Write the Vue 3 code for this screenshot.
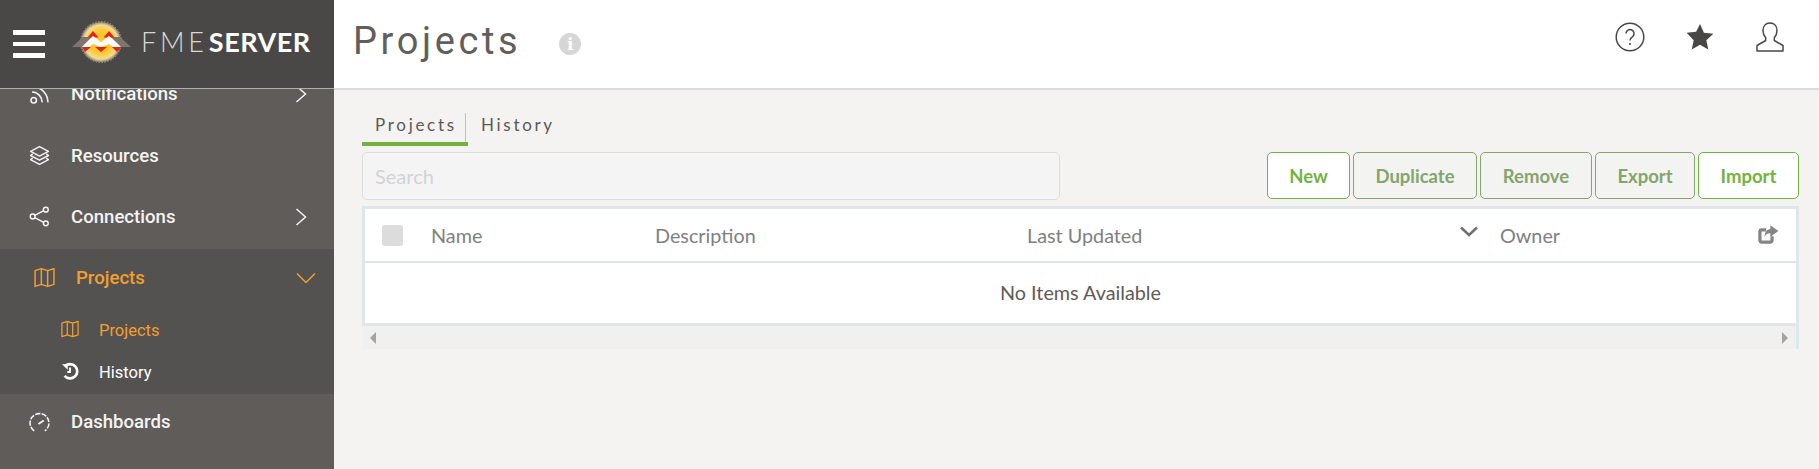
<script setup>
const buttons = [
  { label: 'New', on: true, width: 83 },
  { label: 'Duplicate', on: false, width: 124 },
  { label: 'Remove', on: false, width: 112 },
  { label: 'Export', on: false, width: 100 },
  { label: 'Import', on: true, width: 101 },
]
</script>

<template>
  <div class="page">
    <aside class="sidebar">
      <div class="brand">
        <button class="burger"><span></span><span></span><span></span></button>
        <svg class="logo" width="62" height="44" viewBox="0 0 62 44">
          <defs>
            <radialGradient id="sun">
              <stop offset="0.55" stop-color="#fdc62f" />
              <stop offset="0.85" stop-color="#f6dc8c" />
              <stop offset="1" stop-color="#8d877a" />
            </radialGradient>
          </defs>
          <circle cx="31" cy="21" r="20" fill="url(#sun)" />
          <circle cx="31" cy="21" r="20.5" fill="none" stroke="#a5a096" stroke-dasharray="1.5 1.5" />
          <polygon points="2,26 13,16 22,16 12,26" fill="#7d766c" />
          <polygon points="61,26 50,16 41,16 51,26" fill="#7d766c" />
          <polygon points="23,10 17.500,16.500 28.500,16.500" fill="#e2231a" />
          <polygon points="39,10 33.500,16.500 44.500,16.500" fill="#e2231a" />
          <polygon points="12,26 21,26 15,31" fill="#e2231a" />
          <polygon points="25,26 37,26 31,31" fill="#e2231a" />
          <polygon points="42,26 51,26 47,31" fill="#e2231a" />
          <polygon points="12,26 23,15 31,21 39,15 51,26 43,26 39,23 31,26 23,23 19,26" fill="#fff" />
        </svg>
        <span class="wordmark"><span class="fme">FME</span><span class="server">SERVER</span></span>
      </div>

      <nav class="nav">
        <a class="item first">
          <svg class="icon" viewBox="0 0 20 20" fill="none" stroke="currentColor" stroke-width="1.5"><circle cx="4.5" cy="15.5" r="2.6" /><path d="M3 7.5a10 10 0 0 1 9.5 10" /><path d="M5 2.5a15 15 0 0 1 13 15" /></svg>
          <span>Notifications</span>
          <svg class="chev" viewBox="0 0 12 20" fill="none" stroke="currentColor" stroke-width="1.5"><path d="M1.5 2l9 8-9 8" /></svg>
        </a>
        <a class="item">
          <svg class="icon" viewBox="0 0 20 20" fill="none" stroke="currentColor" stroke-width="1.4" stroke-linejoin="round"><path d="M10 1.5l8.5 4.5-8.5 4.5L1.5 6z" /><path d="M3.5 8.5l-2 1.5 8.500 4.500 8.500-4.500-2-1.500" /><path d="M3.500 12.500l-2 1.500 8.500 4.500 8.500-4.500-2-1.500" /></svg>
          <span>Resources</span>
        </a>
        <a class="item">
          <svg class="icon" viewBox="0 0 20 20" fill="none" stroke="currentColor" stroke-width="1.4"><circle cx="3.500" cy="10" r="2.300" /><circle cx="16" cy="3.500" r="2.300" /><circle cx="16" cy="16.500" r="2.300" /><path d="M5.500 9l8.500-4.500M5.500 11l8.500 4.500" /></svg>
          <span>Connections</span>
          <svg class="chev" viewBox="0 0 12 20" fill="none" stroke="currentColor" stroke-width="1.5"><path d="M1.500 2l9 8-9 8" /></svg>
        </a>

        <div class="group">
          <a class="item active">
            <svg class="icon" viewBox="0 0 20 20" fill="none" stroke="currentColor" stroke-width="1.400" stroke-linejoin="round"><path d="M1 3.500l6-2 6 2 6-2v15l-6 2-6-2-6 2z" /><path d="M7 1.500v15M13 3.500v15" /></svg>
            <span>Projects</span>
            <svg class="down" viewBox="0 0 20 12" fill="none" stroke="currentColor" stroke-width="1.500"><path d="M1 1.500l9 9 9-9" /></svg>
          </a>
          <a class="sub active-sub">
            <svg class="sub-icon" viewBox="0 0 20 20" fill="none" stroke="currentColor" stroke-width="1.400" stroke-linejoin="round"><path d="M1 3.500l6-2 6 2 6-2v15l-6 2-6-2-6 2z" /><path d="M7 1.500v15M13 3.500v15" /></svg>
            <span>Projects</span>
          </a>
          <a class="sub">
            <svg class="sub-icon" viewBox="0 0 20 20" fill="none" stroke="currentColor" stroke-width="3"><path d="M4.500 4.500A8 8 0 1 1 4 15.500" /><path d="M10 6v5H7" stroke-width="2.200" /><path d="M1 2.500h6.500v6z" fill="currentColor" stroke="none" /></svg>
            <span>History</span>
          </a>
        </div>

        <a class="item last">
          <svg class="icon" viewBox="0 0 20 20" fill="none" stroke="currentColor" stroke-width="1.500"><path d="M5 18a9 9 0 1 1 10 0" stroke-dasharray="5 1.200" /><path d="M9 11.500l5-3.500" stroke-width="1.700" /></svg>
          <span>Dashboards</span>
        </a>
      </nav>
    </aside>

    <main class="main">
      <header class="topbar">
        <h1>Projects</h1>
        <span class="info">i</span>
        <div class="top-icons">
          <svg width="30" height="30" viewBox="0 0 30 30" fill="none" stroke="#4a4846" stroke-width="1.500"><circle cx="15" cy="15" r="13.800" /><path d="M11 11.500a4 4 0 1 1 6.300 3.300c-1.500 1-2.300 1.700-2.300 3.700" /><circle cx="15" cy="22" r="1.100" fill="#4a4846" stroke="none" /></svg>
          <svg width="28" height="28" viewBox="0 0 28 28"><path d="M14 1l3.900 8.800 9.500 1-7.100 6.400 2 9.400-8.300-4.800-8.300 4.800 2-9.400L.6 9.800l9.500-1z" fill="#4a4846" /></svg>
          <svg width="30" height="30" viewBox="0 0 30 30" fill="none" stroke="#4a4846" stroke-width="1.500" stroke-linejoin="round"><path d="M15 1c-4.500 0-7 3.200-7 7.500 0 3 1 5.500 2.700 7.300v2.700L2 23.500V29h26v-5.500l-8.700-5v-2.700C21 14 22 11.500 22 8.500 22 4.200 19.500 1 15 1z" /></svg>
        </div>
      </header>

      <section class="content">
        <div class="tabs">
          <a class="tab tab-on">Projects</a>
          <a class="tab">History</a>
        </div>

        <div class="toolbar">
          <input class="search" type="text" placeholder="Search" />
          <div class="actions">
            <button
              v-for="b in buttons"
              :key="b.label"
              class="btn"
              :class="{ on: b.on }"
              :style="{ width: b.width + 'px' }"
            >{{ b.label }}</button>
          </div>
        </div>

        <div class="table">
          <div class="thead">
            <div class="cell-check"><span class="check"></span></div>
            <div>Name</div>
            <div>Description</div>
            <div class="sorted">
              <span>Last Updated</span>
              <svg width="18" height="11" viewBox="0 0 18 11" fill="none" stroke="#6e6e70" stroke-width="2.400"><path d="M1 1.500l8 7.500 8-7.500" /></svg>
            </div>
            <div>Owner</div>
            <svg class="share" width="22" height="21" viewBox="0 0 19 18"><path d="M13 10.500V14a1.500 1.500 0 0 1-1.500 1.500H4A1.500 1.500 0 0 1 2.500 14V6.500A1.500 1.500 0 0 1 4 5h4" fill="none" stroke="#858587" stroke-width="2.800" /><path d="M11.500 1l7 5-7 5V8C9 8 7.500 9 6.500 11c0-4 2-6.500 5-6.800z" fill="#858587" /></svg>
          </div>
          <div class="empty">No Items Available</div>
        </div>
        <div class="hscroll">
          <span class="arrow left"></span>
          <span class="arrow right"></span>
        </div>
      </section>
    </main>
  </div>
</template>

<style>
html, body {
  margin: 0;
  height: 100%;
  overflow: hidden;
}
</style>

<style scoped>
.page {
  display: flex;
  height: 469px;
  font-family: Lato, "Liberation Sans", sans-serif;
  background: #f4f3f1;
}
.sidebar {
  width: 334px;
  flex-shrink: 0;
  display: flex;
  flex-direction: column;
  background: #605c5a;
  color: #fff;
  font-family: Roboto, "Liberation Sans", sans-serif;
  overflow: hidden;
}
.brand {
  height: 88px;
  flex-shrink: 0;
  display: flex;
  align-items: center;
  background: #4a4846;
  border-bottom: 1px solid #a9b0b4;
  position: relative;
  z-index: 1;
}
.burger {
  width: 32px;
  margin-left: 13px;
  padding: 0;
  border: 0;
  background: none;
  display: flex;
  flex-direction: column;
  gap: 7px;
}
.burger span {
  display: block;
  height: 4.500px;
  background: #fff;
}
.logo {
  margin-left: 25px;
  margin-top: -2px;
}
.wordmark {
  margin-left: 9px;
  margin-top: -6px;
  font-family: Lato, "Liberation Sans", sans-serif;
  font-size: 27px;
  line-height: 1;
  white-space: nowrap;
}
.fme {
  font-weight: 300;
  letter-spacing: 3.800px;
  color: #d8d8d8;
  margin-right: 1px;
}
.server {
  font-weight: 700;
  letter-spacing: 0.500px;
}
.nav {
  flex: 1;
  min-height: 0;
}
.item {
  height: 61px;
  display: flex;
  align-items: center;
  padding-left: 29px;
  font-size: 18.600px;
  font-weight: 500;
  color: #f4f4f4;
}
.item.first {
  margin-top: -26px;
  height: 62px;
}
.item.last {
  height: 56px;
}
.icon {
  width: 21px;
  height: 21px;
  margin-right: 21px;
  flex-shrink: 0;
}
.chev {
  width: 12px;
  height: 20px;
  margin-left: auto;
  margin-right: 27px;
}
.group {
  background: #545250;
  height: 145px;
  margin-top: 2px;
}
.item.active {
  color: #f29f2f;
  padding-left: 34px;
  height: 57px;
}
.down {
  width: 20px;
  height: 12px;
  margin-left: auto;
  margin-right: 18px;
}
.sub {
  height: 42px;
  display: flex;
  align-items: center;
  padding-left: 61px;
  font-size: 16.500px;
  position: relative;
  top: 3px;
}
.sub-icon {
  width: 18px;
  height: 18px;
  margin-right: 20px;
  margin-top: -3px;
}
.active-sub {
  color: #f29f2f;
}
.main {
  flex: 1;
  min-width: 0;
  display: flex;
  flex-direction: column;
}
.topbar {
  height: 88px;
  flex-shrink: 0;
  display: flex;
  align-items: center;
  background: #fff;
  border-bottom: 2px solid #d5dde2;
  padding-left: 19px;
}
h1 {
  margin: 0 0 6px;
  font-family: Roboto, "Liberation Sans", sans-serif;
  font-size: 38px;
  font-weight: 400;
  letter-spacing: 3.600px;
  color: #625e5c;
}
.info {
  width: 22px;
  height: 22px;
  margin-left: 38px;
  margin-top: -1px;
  border-radius: 50%;
  background: #d6d6d6;
  color: #fff;
  font-family: "DejaVu Serif", serif;
  font-weight: 700;
  font-size: 17px;
  line-height: 22px;
  text-align: center;
}
.top-icons {
  margin-left: auto;
  margin-right: 34px;
  margin-top: -14px;
  display: flex;
  align-items: center;
  gap: 41px;
}
.content {
  flex: 1;
  padding: 23px 20px 0 28px;
}
.tabs {
  display: flex;
  height: 33px;
}
.tab {
  padding: 0 13px;
  font-size: 17px;
  line-height: 23px;
  letter-spacing: 2.700px;
  color: #5c5856;
}
.tab-on {
  width: 106px;
  box-sizing: border-box;
  border-bottom: 4px solid #72b33f;
  position: relative;
}
.tab-on::after {
  content: "";
  position: absolute;
  right: 2px;
  top: 0;
  bottom: 0;
  width: 1px;
  background: #c6bdb3;
}
.toolbar {
  display: flex;
  justify-content: space-between;
  margin-top: 6px;
}
.search {
  width: 698px;
  height: 48px;
  box-sizing: border-box;
  border: 1px solid #dcdcdc;
  border-radius: 5px;
  background: #f5f4f4;
  padding: 0 12px;
  font-family: inherit;
  font-size: 20px;
  outline: none;
}
.search::placeholder {
  color: #d2d2d6;
}
.actions {
  display: flex;
  gap: 3px;
}
.btn {
  height: 47px;
  box-sizing: border-box;
  padding: 0;
  border: 1px solid #84a56d;
  border-radius: 5px;
  background: #f3f3f1;
  color: #84a56d;
  font-family: inherit;
  font-size: 18.500px;
  font-weight: 700;
}
.btn.on {
  border-color: #72b33f;
  background: #fff;
  color: #72b33f;
}
.table {
  margin-top: 6px;
  width: 1437px;
  height: 120px;
  box-sizing: border-box;
  border: 3px solid #dfe7ea;
  background: #fff;
}
.thead {
  height: 52px;
  display: grid;
  grid-template-columns: 66px 224px 372px 473px 1fr;
  align-items: center;
  border-bottom: 2px solid #dfe3e5;
  font-size: 19.800px;
  color: #807f82;
  position: relative;
}
.cell-check {
  padding-left: 17px;
  display: flex;
}
.check {
  width: 21px;
  height: 21px;
  border-radius: 3px;
  background: #dcdcdc;
}
.sorted {
  display: flex;
  justify-content: space-between;
  padding-right: 22px;
}
.sorted svg {
  margin-top: 3px;
}
.share {
  position: absolute;
  right: 17px;
  top: 15px;
}
.empty {
  height: 63px;
  line-height: 58px;
  text-align: center;
  font-size: 19.800px;
  color: #5f5b59;
}
.hscroll {
  width: 1437px;
  height: 23px;
  background: #f0f0f0;
  display: flex;
  justify-content: space-between;
  align-items: center;
  box-sizing: border-box;
  padding: 0 8px;
  border-right: 3px solid #dfe7ea;
}
.arrow {
  width: 0;
  height: 0;
  border-top: 6px solid transparent;
  border-bottom: 6px solid transparent;
}
.arrow.left {
  border-right: 6px solid #a3a3a3;
}
.arrow.right {
  border-left: 6px solid #a3a3a3;
}
</style>
